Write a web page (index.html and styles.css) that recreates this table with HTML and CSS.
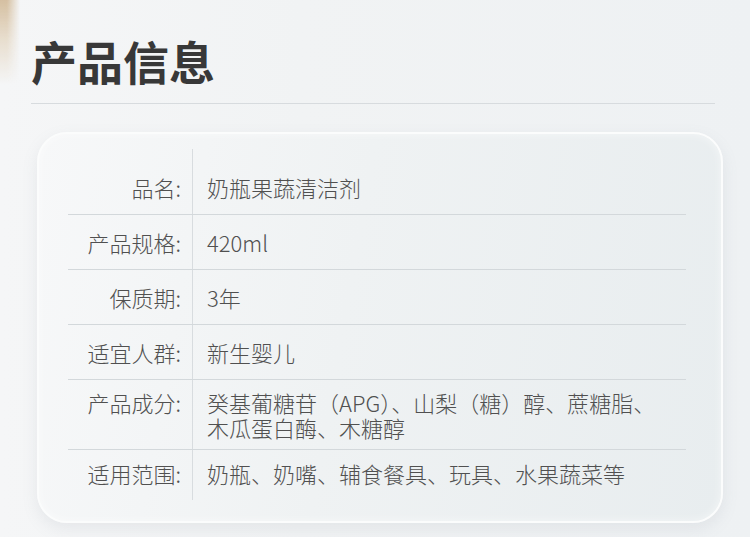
FILE: index.html
```html
<!DOCTYPE html>
<html lang="zh-CN">
<head>
<meta charset="utf-8">
<title>产品信息</title>
<link rel="stylesheet" href="styles.css">
</head>
<body>
<div class="wood"></div>
<main class="page">
  <h1 class="title">产品信息</h1>
  <div class="rule"></div>
  <section class="card">
    <div class="table">
      <div class="row first">
        <div class="label">品名:</div>
        <div class="value">奶瓶果蔬清洁剂</div>
      </div>
      <div class="row">
        <div class="label">产品规格:</div>
        <div class="value">420ml</div>
      </div>
      <div class="row">
        <div class="label">保质期:</div>
        <div class="value">3年</div>
      </div>
      <div class="row">
        <div class="label">适宜人群:</div>
        <div class="value">新生婴儿</div>
      </div>
      <div class="row multi">
        <div class="label">产品成分:</div>
        <div class="value">癸基葡糖苷（APG）、山梨（糖）醇、蔗糖脂、<br>木瓜蛋白酶、木糖醇</div>
      </div>
      <div class="row last">
        <div class="label">适用范围:</div>
        <div class="value">奶瓶、奶嘴、辅食餐具、玩具、水果蔬菜等</div>
      </div>
    </div>
  </section>
</main>
</body>
</html>
```

FILE: styles.css
```css
html, body {
  margin: 0;
  padding: 0;
}

body {
  width: 750px;
  height: 537px;
  overflow: hidden;
  position: relative;
  font-family: "Noto Sans CJK SC", "Noto Sans", sans-serif;
  background: linear-gradient(90deg, #f5f6f7 0%, #f1f3f4 40%, #eef1f3 100%);
}

.wood {
  position: absolute;
  left: 0;
  top: 0;
  width: 20px;
  height: 85px;
  background: linear-gradient(180deg, rgba(205, 178, 140, 0.8) 0%, rgba(220, 200, 170, 0.55) 45%, rgba(240, 232, 220, 0) 100%);
  -webkit-mask-image: linear-gradient(90deg, #000 35%, transparent 100%);
  mask-image: linear-gradient(90deg, #000 35%, transparent 100%);
}

.page {
  position: relative;
  padding: 37px 0 0 31px;
}

.title {
  margin: 0;
  font-size: 46px;
  line-height: 46px;
  font-weight: 700;
  color: #383838;
}

.rule {
  margin-top: 20px;
  width: 684px;
  height: 1px;
  background: #d7dbde;
}

.card {
  box-sizing: border-box;
  margin: 28px 0 0 6px;
  width: 686px;
  height: 391px;
  padding: 15px 0 0 29px;
  border: 2px solid #fbfcfc;
  border-radius: 30px;
  background: linear-gradient(100deg, #f7f8f9 0%, #eff2f3 45%, #e8edef 100%);
  box-shadow: 0 6px 16px rgba(120, 135, 145, 0.12), inset 0 0 10px rgba(255, 255, 255, 0.5);
}

.table {
  width: 618px;
}

.row {
  display: grid;
  grid-template-columns: 124px 1fr;
  border-bottom: 1px solid #d3d8db;
  font-size: 22px;
  line-height: 24px;
  font-weight: 300;
  color: #505050;
}

.row.last {
  border-bottom: none;
}

.label {
  text-align: right;
  padding: 15px 11px 15px 0;
}

.value {
  border-left: 1px solid #d8dcdf;
  padding: 15px 0 15px 14px;
}

.row.first .label,
.row.first .value {
  padding-top: 26px;
}

.row.multi .label,
.row.multi .value {
  padding-top: 10px;
  padding-bottom: 9px;
}

.row.multi .value {
  line-height: 25px;
}

.row.last .label,
.row.last .value {
  padding-top: 11px;
  padding-bottom: 15px;
}
```
